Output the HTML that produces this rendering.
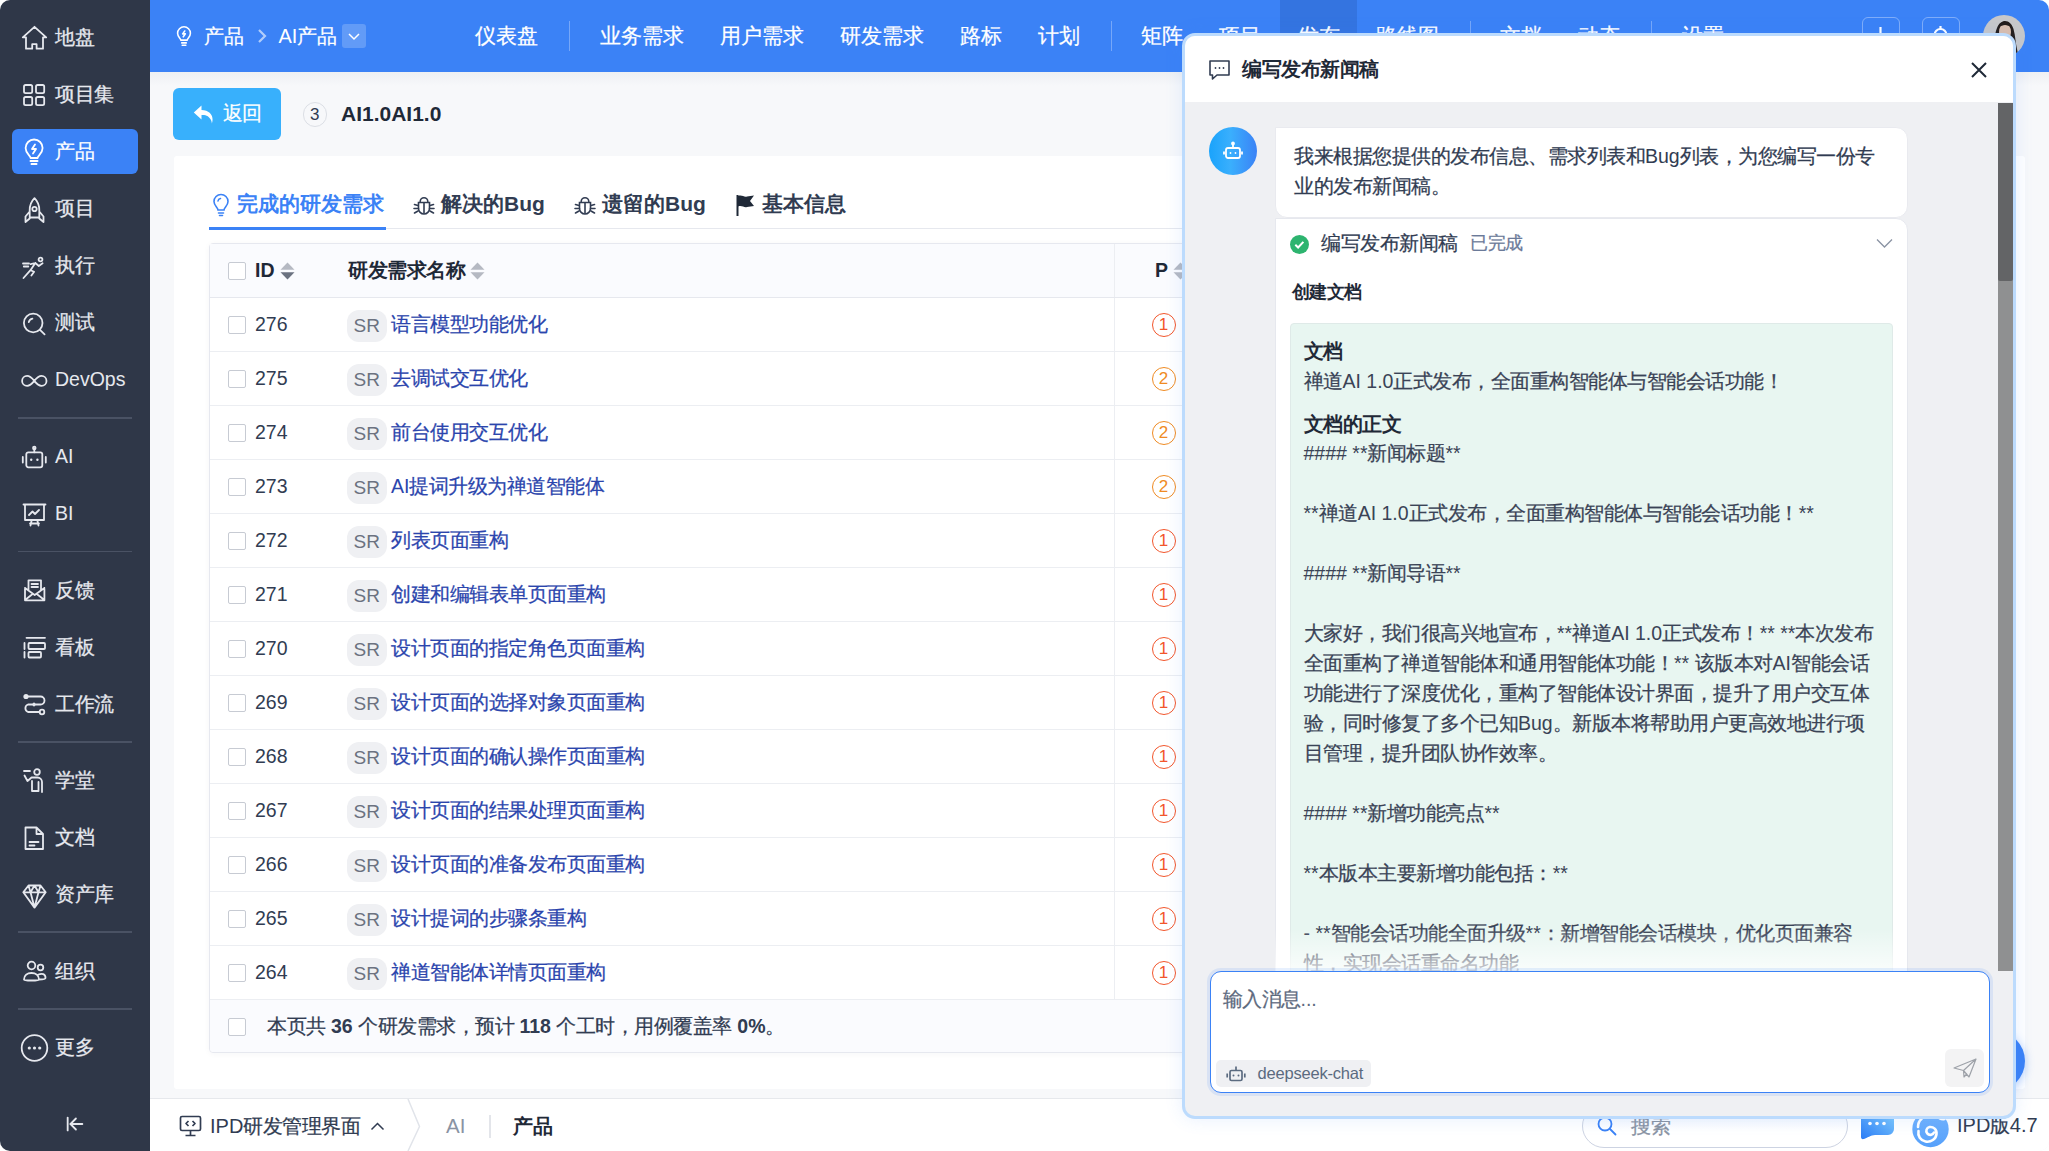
<!DOCTYPE html>
<html><head><meta charset="utf-8">
<style>
*{box-sizing:border-box;margin:0;padding:0}
html,body{width:2049px;height:1151px;overflow:hidden;background:#ffffff}
body{font-family:"Liberation Sans",sans-serif;color:#313c52;position:relative}
.abs{position:absolute}
#app{position:absolute;left:0;top:0;width:2049px;height:1151px;border-radius:10px;overflow:hidden;background:#f5f6f8}
#side{position:absolute;left:0;top:0;width:150px;height:1151px;background:#2f3748}
#head{position:absolute;left:0;top:0;width:2049px;height:72px}
#head .bg{position:absolute;left:150px;top:0;width:1899px;height:72px;background:#3b82f6}
#main{position:absolute;left:0;top:0;width:2049px;height:1098px}
#main .bg{position:absolute;left:150px;top:72px;width:1899px;height:1026px;background:#f7f8fa}
#foot{position:absolute;left:150px;top:1098px;width:1899px;height:53px;background:#fff;border-top:1px solid #e6e8ec}
.si{position:absolute;left:12px;width:126px;height:45px;border-radius:6px;color:#e6e8ee;font-size:19.5px;line-height:45px}
.si .ic{position:absolute;left:9px;top:9.5px;width:26px;height:26px;overflow:visible}
.si .tx{position:absolute;left:43px;top:0}
.si.act{background:#3b82f6;color:#fff}
.sdiv{position:absolute;left:18px;width:114px;height:1.5px;background:#4a5264}
.nav{position:absolute;top:14px;height:44px;line-height:44px;color:#fff;font-size:21px;white-space:nowrap}
.nsep{position:absolute;top:21px;width:1px;height:30px;background:rgba(255,255,255,.3)}
.card{position:absolute;left:174px;top:155.5px;width:1851px;height:933px;background:#fff;border-radius:3px}
.btnback{position:absolute;left:172.5px;top:88px;width:108px;height:51.5px;background:#38b0fc;border-radius:6px;color:#fff;font-size:19.5px;line-height:51.5px}
.tab{position:absolute;top:185px;height:38px;line-height:38px;font-size:21px;font-weight:bold;color:#313c52;white-space:nowrap}
.tbl{position:absolute;left:209px;top:243px;width:1781px;height:810px;border:1px solid #e6e8ef;border-radius:4px;background:#fff;box-shadow:0 1px 6px rgba(30,40,80,.04)}
.th{position:absolute;left:0;top:0;width:100%;height:54px;background:#fafbfe;border-bottom:1px solid #e6e8ee}
.row{position:absolute;left:0;width:100%;height:54px;border-bottom:1px solid #eceef2}
.cb{position:absolute;left:18px;top:18px;width:18px;height:18px;border:1.5px solid #c7cbd3;border-radius:2px;background:#fff}
.cell{position:absolute;top:0;height:53px;line-height:53px;font-size:19.5px;white-space:nowrap;color:#313c52}
.sr{position:absolute;left:137px;top:12px;width:39.5px;height:32px;border-radius:12px;background:#eff0f3;color:#6b7280;font-size:19px;line-height:32px;text-align:center}
.lnk{position:absolute;left:181px;top:0;line-height:53px;font-size:19.5px;color:#2b45ad;white-space:nowrap}
.pri{position:absolute;left:941.5px;top:15px;width:24px;height:24px;border-radius:50%;border:1.5px solid #f2562c;color:#f2562c;font-size:17px;line-height:21px;text-align:center}
.pri.o{border-color:#ef8b23;color:#ef8b23}
.vsep{position:absolute;left:903.5px;top:0;width:1px;height:100%;background:#eceef2}
.panel{position:absolute;left:1182px;top:33px;width:834px;height:1086px;border:3px solid #bcdbfd;border-radius:13px;background:#eff0f3;overflow:hidden;box-shadow:0 0 18px rgba(59,130,246,.12)}
.ph{position:absolute;left:0;top:0;width:100%;height:66px;background:#fff}
.ml{position:absolute;left:0;height:30px;line-height:30px;font-size:19.5px;white-space:nowrap;color:#3a4356}
.gb .ml{left:12.5px}
.c{letter-spacing:-0.5px}
.nav .c,.tab .c,.t21 .c,.t20 .c{letter-spacing:0}
.c{-webkit-text-stroke:0.25px currentColor}
b .c,.tab .c,[style*="font-weight:bold"] .c,.t20 .c{-webkit-text-stroke:0}

</style></head><body>
<div id="app">
 <div id="side">
<div class="si" style="top:15.0px"><svg class="ic" viewBox="0 0 26 26" fill="none" stroke="currentColor" stroke-width="1.8" stroke-linecap="round" stroke-linejoin="round"><path d="M1.8 12.3L13.5 1.8 25.2 12.3H22V23.7H15.6V19.2H11.2V23.7H5V12.3z"/></svg><span class="tx"><span class=c>地盘</span></span></div>
<div class="si" style="top:72.0px"><svg class="ic" viewBox="0 0 26 26" fill="none" stroke="currentColor" stroke-width="1.8" stroke-linecap="round" stroke-linejoin="round"><rect x="3" y="3" width="8.2" height="8.2" rx="1.6"/><rect x="15" y="3" width="8.2" height="8.2" rx="1.6"/><rect x="3" y="15" width="8.2" height="8.2" rx="1.6"/><rect x="15" y="15" width="8.2" height="8.2" rx="1.6"/></svg><span class="tx"><span class=c>项目集</span></span></div>
<div class="si act" style="top:129.0px"><svg class="ic" viewBox="0 0 26 26" fill="none" stroke="currentColor" stroke-width="1.8" stroke-linecap="round" stroke-linejoin="round"><path d="M9.6 19c0-2.5-5-4.2-5-10a8.5 8.5 0 0 1 17 0c0 5.8-5 7.5-5 10z"/><path d="M9.5 22h7M10.5 25h5" stroke-width="2"/><path d="M14 5.5l-3 4.5h4l-3 4.5"/></svg><span class="tx"><span class=c>产品</span></span></div>
<div class="si" style="top:186.0px"><svg class="ic" viewBox="0 0 26 26" fill="none" stroke="currentColor" stroke-width="1.8" stroke-linecap="round" stroke-linejoin="round"><path d="M13.5 2.2c3.5 3.5 4.8 7.8 4.8 12v7.3H8.7v-7.3c0-4.2 1.3-8.5 4.8-12zM8.7 15.5L4.5 20.5v5.5l4.2-3.5M18.3 15.5l4.2 5v5.5l-4.2-3.5"/><circle cx="13.5" cy="13" r="2.2"/></svg><span class="tx"><span class=c>项目</span></span></div>
<div class="si" style="top:243.0px"><svg class="ic" viewBox="0 0 26 26" fill="none" stroke="currentColor" stroke-width="1.8" stroke-linecap="round" stroke-linejoin="round"><circle cx="19.5" cy="6.5" r="1.9"/><path d="M2.5 25l7-7.8 3.6 1.6-2.7 3.8M9.5 17.2l4.8-7.2-4.6 1.2M14.3 10l3.5 3 3.8-2.7M2 10.5h6M2.8 13.5h4.5"/></svg><span class="tx"><span class=c>执行</span></span></div>
<div class="si" style="top:300.0px"><svg class="ic" viewBox="0 0 26 26" fill="none" stroke="currentColor" stroke-width="1.8" stroke-linecap="round" stroke-linejoin="round"><circle cx="12.2" cy="13" r="9.3"/><path d="M19 19.8l4.6 4.5M7.8 12.2a4.5 4.5 0 0 1 3.6-3.6"/></svg><span class="tx"><span class=c>测试</span></span></div>
<div class="si" style="top:357.0px"><svg class="ic" viewBox="0 0 26 26" fill="none" stroke="currentColor" stroke-width="1.8" stroke-linecap="round" stroke-linejoin="round"><path d="M13.3 13.9c-2.4-3-4.2-5-7.2-5a5 5 0 0 0 0 10c3 0 4.8-2 7.2-5s4.2-5 7.2-5a5 5 0 0 1 0 10c-3 0-4.8-2-7.2-5z"/></svg><span class="tx">DevOps</span></div>
<div class="si" style="top:434.0px"><svg class="ic" viewBox="0 0 26 26" fill="none" stroke="currentColor" stroke-width="1.8" stroke-linecap="round" stroke-linejoin="round"><rect x="5.3" y="8.3" width="16" height="15" rx="2"/><path d="M13.3 4.5v3.8M1.8 13v5.5M24.8 13v5.5"/><circle cx="13.3" cy="4" r="1.3"/><circle cx="10.2" cy="15.8" r="1.2" fill="currentColor" stroke="none"/><circle cx="16.4" cy="15.8" r="1.2" fill="currentColor" stroke="none"/></svg><span class="tx">AI</span></div>
<div class="si" style="top:491.0px"><svg class="ic" viewBox="0 0 26 26" fill="none" stroke="currentColor" stroke-width="1.8" stroke-linecap="round" stroke-linejoin="round"><path d="M2.5 3.5h22M4 3.5v15.5h19V3.5M9.5 24.5l1.2-5.5M17.5 24.5l-1.2-5.5M9 22.5h9M8 14l3.5-3.5 2.5 2.5 4-4"/></svg><span class="tx">BI</span></div>
<div class="si" style="top:567.5px"><svg class="ic" viewBox="0 0 26 26" fill="none" stroke="currentColor" stroke-width="1.8" stroke-linecap="round" stroke-linejoin="round"><path d="M4 11l9.7 7 9.7-7M4 11v12.3h19.4V11M7.5 13V3.3h12.5V13M10.5 7h6.5M10.5 10h6.5M4 23l7-5.5M23.4 23l-7-5.5"/></svg><span class="tx"><span class=c>反馈</span></span></div>
<div class="si" style="top:624.5px"><svg class="ic" viewBox="0 0 26 26" fill="none" stroke="currentColor" stroke-width="1.8" stroke-linecap="round" stroke-linejoin="round"><path d="M5.5 3.8h18.5M8.5 9h14.5a1 1 0 0 1 1 1v4a1 1 0 0 1-1 1H8.5a1 1 0 0 1-1-1v-4a1 1 0 0 1 1-1zM8.5 18h10.5a1 1 0 0 1 1 1v3.5a1 1 0 0 1-1 1H8.5a1 1 0 0 1-1-1V19a1 1 0 0 1 1-1zM3.5 9v6M3.5 18v5.5"/></svg><span class="tx"><span class=c>看板</span></span></div>
<div class="si" style="top:681.5px"><svg class="ic" viewBox="0 0 26 26" fill="none" stroke="currentColor" stroke-width="1.8" stroke-linecap="round" stroke-linejoin="round"><circle cx="5" cy="5.5" r="2.6" fill="currentColor" stroke="none"/><circle cx="21" cy="21" r="2.3"/><path d="M7.5 5.5h12a4 4 0 0 1 0 8H7a4 4 0 0 0 0 7.5h11.5"/><path d="M13 11.2l2.2 2.3-2.2 2.3-2.2-2.3z" fill="currentColor" stroke="none"/></svg><span class="tx"><span class=c>工作流</span></span></div>
<div class="si" style="top:757.5px"><svg class="ic" viewBox="0 0 26 26" fill="none" stroke="currentColor" stroke-width="1.8" stroke-linecap="round" stroke-linejoin="round"><circle cx="16" cy="5" r="2.8"/><path d="M3 4h6M3.5 8.5l3 5.5 4-3.5h6a4.5 4.5 0 0 1 4.5 4.5V25M11 14v10h6.5v-9"/></svg><span class="tx"><span class=c>学堂</span></span></div>
<div class="si" style="top:814.5px"><svg class="ic" viewBox="0 0 26 26" fill="none" stroke="currentColor" stroke-width="1.8" stroke-linecap="round" stroke-linejoin="round"><path d="M4.5 3.5h11l6.5 6.5v15H4.5zM15.5 3.5v6.5h6.5M8.5 18h9M8.5 21.5h5"/></svg><span class="tx"><span class=c>文档</span></span></div>
<div class="si" style="top:871.5px"><svg class="ic" viewBox="0 0 26 26" fill="none" stroke="currentColor" stroke-width="1.8" stroke-linecap="round" stroke-linejoin="round"><path d="M2.3 11.3L7.5 4.5h12l5.2 6.8-11.2 15.3zM2.3 11.3h22.4M9.5 11.3l4 15.3 4-15.3M7.5 4.5l2 6.8 4-6.8 4 6.8 2-6.8"/></svg><span class="tx"><span class=c>资产库</span></span></div>
<div class="si" style="top:948.5px"><svg class="ic" viewBox="0 0 26 26" fill="none" stroke="currentColor" stroke-width="1.8" stroke-linecap="round" stroke-linejoin="round"><circle cx="10.5" cy="7.5" r="3.8"/><circle cx="19.5" cy="9.5" r="2.8"/><path d="M3 21.5c0-4 3.2-6.5 7.5-6.5s7.5 2.5 7.5 6.5c0 1.5-15 1.5-15 0zM17.5 16.5c3.5-1.5 7-.5 7 3.5 0 1.5-3.5 1.5-6.5 1.5"/></svg><span class="tx"><span class=c>组织</span></span></div>
<div class="si" style="top:1024.5px"><svg class="ic" viewBox="0 0 26 26" fill="none" stroke="currentColor" stroke-width="1.8" stroke-linecap="round" stroke-linejoin="round"><circle cx="13.5" cy="14" r="12.8"/><circle cx="8.3" cy="14" r="1.6" fill="currentColor" stroke="none"/><circle cx="13.5" cy="14" r="1.6" fill="currentColor" stroke="none"/><circle cx="18.7" cy="14" r="1.6" fill="currentColor" stroke="none"/></svg><span class="tx"><span class=c>更多</span></span></div>
<div class="sdiv" style="top:417.25px"></div>
<div class="sdiv" style="top:550.75px"></div>
<div class="sdiv" style="top:741.25px"></div>
<div class="sdiv" style="top:931.25px"></div>
<div class="sdiv" style="top:1008.25px"></div>
<svg class="abs" style="left:64px;top:1113px" width="22" height="22" viewBox="0 0 24 24" fill="none" stroke="#e6e8ee" stroke-width="2" stroke-linecap="round"><path d="M4 5v14M20 12H8M13 6l-6 6 6 6"/></svg>
 </div>
 <div id="head">
<div class="bg"></div>
<div class="abs" style="left:1280px;top:0;width:77px;height:72px;background:#3474e0"></div>
<div class="nav" style="left:475px"><span class=c>仪表盘</span></div>
<div class="nav" style="left:600px"><span class=c>业务需求</span></div>
<div class="nav" style="left:719.6px"><span class=c>用户需求</span></div>
<div class="nav" style="left:839.7px"><span class=c>研发需求</span></div>
<div class="nav" style="left:959.5px"><span class=c>路标</span></div>
<div class="nav" style="left:1038px"><span class=c>计划</span></div>
<div class="nav" style="left:1141px"><span class=c>矩阵</span></div>
<div class="nav" style="left:1218.6px"><span class=c>项目</span></div>
<div class="nav" style="left:1298px"><span class=c>发布</span></div>
<div class="nav" style="left:1375.7px"><span class=c>路线图</span></div>
<div class="nav" style="left:1500px"><span class=c>文档</span></div>
<div class="nav" style="left:1578px"><span class=c>动态</span></div>
<div class="nav" style="left:1682px"><span class=c>设置</span></div>
<div class="nsep" style="left:569px"></div>
<div class="nsep" style="left:1111px"></div>
<div class="nsep" style="left:1469.5px"></div>
<div class="nsep" style="left:1650.5px"></div>
<svg class="abs" style="left:173px;top:24px" width="22" height="24" viewBox="0 0 24 24" fill="none" stroke="#fff" stroke-width="1.7" stroke-linecap="round" stroke-linejoin="round"><path d="M8.5 16.5c0-2-3.5-3.5-3.5-7.5a7 7 0 0 1 14 0c0 4-3.5 5.5-3.5 7.5zM9.5 19.5h5M10 22h4M12.8 6.5l-2.3 3.2h3l-2.3 3.2"/></svg>
<div class="nav" style="left:204px;font-size:20px"><span class=c>产品</span></div>
<svg class="abs" style="left:256px;top:28px" width="12" height="16" viewBox="0 0 12 16" fill="none" stroke="rgba(255,255,255,.6)" stroke-width="2.2"><path d="M3 2l6 6-6 6"/></svg>
<div class="nav" style="left:278.5px;font-size:20px">AI<span class=c>产品</span></div>
<div class="abs" style="left:342px;top:24px;width:24px;height:24px;border-radius:3px;background:rgba(255,255,255,.2)"><svg width="24" height="24" viewBox="0 0 24 24" fill="none" stroke="#fff" stroke-width="1.5"><path d="M7 10l5 5 5-5"/></svg></div>
<div class="abs" style="left:1862px;top:16.5px;width:38px;height:38px;border:1.5px solid rgba(255,255,255,.35);border-radius:6px"><svg width="35" height="35" viewBox="0 0 35 35" stroke="#fff" stroke-width="2.2"><path d="M17.5 9v17M9 17.5h17"/></svg></div>
<div class="abs" style="left:1922px;top:16.5px;width:38px;height:38px;border:1.5px solid rgba(255,255,255,.35);border-radius:6px"><svg width="35" height="35" viewBox="0 0 35 35" fill="none" stroke="#fff" stroke-width="2.2"><circle cx="17.5" cy="17" r="6"/><path d="M17.5 8v3"/></svg></div>
<div class="abs" style="left:1983px;top:14.5px;width:42px;height:42px;border-radius:50%;background:#c8c8ca;overflow:hidden"><svg width="42" height="42" viewBox="0 0 42 42"><path d="M11 42c0-10 0-22 3-29 2-5 5-7 8-7 4 0 7 3 8.5 8 2 7 2 14 3.5 20 .5 3 1.5 6 2.5 8z" fill="#241c1a"/><ellipse cx="22" cy="17" rx="6" ry="8.5" fill="#dcbfae"/><path d="M14.5 42c1-6 3.5-9 7.5-9s6.5 3 7 9z" fill="#e9e4e0"/><path d="M15 12c2-4 5-5 8-5 3 0 5 2 6 5-3-1-5-2-7-2s-4 1-7 2z" fill="#241c1a"/></svg></div>
 </div>
 <div id="main">
<div class="bg"></div>
<div class="abs" style="left:150px;top:72px;width:1899px;height:14px;background:linear-gradient(#eef0f3,rgba(247,248,250,0))"></div>
<div class="btnback"><svg class="abs" style="left:20px;top:17px" width="21" height="19" viewBox="0 0 21 19"><path d="M8.5 0.5L0.8 7.5l7.7 7V10c4.5-.3 8 1.2 9.8 5.8.5 1.3.6 2.5.5 3 2.6-7.500-1.5-13.500-10.3-13.800z" fill="#fff"/></svg><span class="abs" style="left:50px"><span class=c>返回</span></span></div>
<div class="abs" style="left:302.5px;top:102px;width:24.5px;height:24.5px;border-radius:50%;border:1.5px solid #dcdfe5;font-size:17px;line-height:23px;text-align:center;color:#313c52">3</div>
<div class="abs" style="left:341px;top:96px;height:36px;line-height:36px;font-size:21px;font-weight:bold;color:#1f2937">AI1.0AI1.0</div>
<div class="card"></div>
<svg class="abs" style="left:210px;top:193px" width="22" height="24" viewBox="0 0 22 24" fill="none" stroke="#3b82f6" stroke-width="1.6" stroke-linecap="round"><path d="M8 17c0-2.5-4-4-4-8.5a7 7 0 0 1 14 0C18 13 14 14.5 14 17zM8.5 20h5M9.5 22.5h3M8 8a3 3 0 0 1 2.5-2.5"/></svg>
<div class="tab" style="left:237px;color:#3b82f6"><span class=c>完成的研发需求</span></div>
<svg class="abs" style="left:413px;top:193px" width="22" height="24" viewBox="0 0 22 22" fill="none" stroke="#313c52" stroke-width="1.6" stroke-linecap="round"><path d="M7.2 7.5a3.8 3.8 0 0 1 7.6 0"/><path d="M5.5 8.5h11v6a5.5 5.5 0 0 1-11 0z"/><path d="M1.5 10.5l3.5 1M20.5 10.5l-3.5 1M1 14.5h4.5M21 14.5h-4.5M1.5 19l3.5-2M20.5 19l-3.5-2M11 9v10"/></svg>
<div class="tab" style="left:441px"><span class=c>解决的</span>Bug</div>
<svg class="abs" style="left:574px;top:193px" width="22" height="24" viewBox="0 0 22 22" fill="none" stroke="#313c52" stroke-width="1.6" stroke-linecap="round"><path d="M7.2 7.5a3.8 3.8 0 0 1 7.6 0"/><path d="M5.5 8.5h11v6a5.5 5.5 0 0 1-11 0z"/><path d="M1.5 10.5l3.5 1M20.5 10.5l-3.5 1M1 14.5h4.5M21 14.5h-4.5M1.5 19l3.5-2M20.5 19l-3.5-2M11 9v10"/></svg>
<div class="tab" style="left:602px"><span class=c>遗留的</span>Bug</div>
<svg class="abs" style="left:735px;top:193px" width="22" height="24" viewBox="0 0 22 24"><path d="M2.5 2v21" stroke="#1f2937" stroke-width="2"/><path d="M3 3c4-1.5 6 1.5 9 .5l7-1-4 5.5 4 5-7 1c-3 1-5-2-9-.5z" fill="#1f2937"/></svg>
<div class="tab" style="left:762px"><span class=c>基本信息</span></div>
<div class="abs" style="left:386px;top:227.5px;width:1604px;height:1.5px;background:#e6e8ee"></div>
<div class="abs" style="left:209px;top:226.5px;width:177px;height:3.5px;background:#3b82f6"></div>
<div class="tbl">
<div class="th"><div class="cb" style="top:18px"></div>
<div class="cell" style="left:45px;font-weight:bold;color:#1f2937">ID <span style="position:relative;top:-1px"><svg width="15" height="22" viewBox="0 0 15 22" style="vertical-align:middle"><path d="M0.5 9.8L7.5 2.5l7 7.3z" fill="#b5b9c2"/><path d="M0.5 12.2L7.5 19.5l7-7.3z" fill="#6b7280"/></svg></span></div>
<div class="cell" style="left:138px;font-weight:bold;color:#1f2937"><span class=c>研发需求名称</span> <span style="position:relative;top:-1px"><svg width="15" height="22" viewBox="0 0 15 22" style="vertical-align:middle"><path d="M0.5 9.8L7.5 2.5l7 7.3z" fill="#b5b9c2"/><path d="M0.5 12.2L7.5 19.5l7-7.3z" fill="#b5b9c2"/></svg></span></div>
<div class="vsep"></div>
<div class="cell" style="left:945px;font-weight:bold;color:#1f2937">P <span style="position:relative;top:-1px"><svg width="15" height="22" viewBox="0 0 15 22" style="vertical-align:middle"><path d="M0.5 9.8L7.5 2.5l7 7.3z" fill="#b5b9c2"/><path d="M0.5 12.2L7.5 19.5l7-7.3z" fill="#b5b9c2"/></svg></span></div>
</div>
<div class="row" style="top:54px"><div class="cb"></div><div class="cell" style="left:45px">276</div><div class="sr">SR</div><div class="lnk"><span class=c>语言模型功能优化</span></div><div class="vsep"></div><div class="pri">1</div></div>
<div class="row" style="top:108px"><div class="cb"></div><div class="cell" style="left:45px">275</div><div class="sr">SR</div><div class="lnk"><span class=c>去调试交互优化</span></div><div class="vsep"></div><div class="pri o">2</div></div>
<div class="row" style="top:162px"><div class="cb"></div><div class="cell" style="left:45px">274</div><div class="sr">SR</div><div class="lnk"><span class=c>前台使用交互优化</span></div><div class="vsep"></div><div class="pri o">2</div></div>
<div class="row" style="top:216px"><div class="cb"></div><div class="cell" style="left:45px">273</div><div class="sr">SR</div><div class="lnk">AI<span class=c>提词升级为禅道智能体</span></div><div class="vsep"></div><div class="pri o">2</div></div>
<div class="row" style="top:270px"><div class="cb"></div><div class="cell" style="left:45px">272</div><div class="sr">SR</div><div class="lnk"><span class=c>列表页面重构</span></div><div class="vsep"></div><div class="pri">1</div></div>
<div class="row" style="top:324px"><div class="cb"></div><div class="cell" style="left:45px">271</div><div class="sr">SR</div><div class="lnk"><span class=c>创建和编辑表单页面重构</span></div><div class="vsep"></div><div class="pri">1</div></div>
<div class="row" style="top:378px"><div class="cb"></div><div class="cell" style="left:45px">270</div><div class="sr">SR</div><div class="lnk"><span class=c>设计页面的指定角色页面重构</span></div><div class="vsep"></div><div class="pri">1</div></div>
<div class="row" style="top:432px"><div class="cb"></div><div class="cell" style="left:45px">269</div><div class="sr">SR</div><div class="lnk"><span class=c>设计页面的选择对象页面重构</span></div><div class="vsep"></div><div class="pri">1</div></div>
<div class="row" style="top:486px"><div class="cb"></div><div class="cell" style="left:45px">268</div><div class="sr">SR</div><div class="lnk"><span class=c>设计页面的确认操作页面重构</span></div><div class="vsep"></div><div class="pri">1</div></div>
<div class="row" style="top:540px"><div class="cb"></div><div class="cell" style="left:45px">267</div><div class="sr">SR</div><div class="lnk"><span class=c>设计页面的结果处理页面重构</span></div><div class="vsep"></div><div class="pri">1</div></div>
<div class="row" style="top:594px"><div class="cb"></div><div class="cell" style="left:45px">266</div><div class="sr">SR</div><div class="lnk"><span class=c>设计页面的准备发布页面重构</span></div><div class="vsep"></div><div class="pri">1</div></div>
<div class="row" style="top:648px"><div class="cb"></div><div class="cell" style="left:45px">265</div><div class="sr">SR</div><div class="lnk"><span class=c>设计提词的步骤条重构</span></div><div class="vsep"></div><div class="pri">1</div></div>
<div class="row" style="top:702px"><div class="cb"></div><div class="cell" style="left:45px">264</div><div class="sr">SR</div><div class="lnk"><span class=c>禅道智能体详情页面重构</span></div><div class="vsep"></div><div class="pri">1</div></div>
<div class="row" style="top:756px;background:#fafbfe;border-bottom:none;height:52px;border-radius:0 0 4px 4px"><div class="cb"></div><div class="cell" style="left:57px"><span class=c>本页共</span> <b>36</b> <span class=c>个研发需求，预计</span> <b>118</b> <span class=c>个工时，用例覆盖率</span> <b>0%</b><span class=c>。</span></div></div>
</div>
 </div>
 <div id="foot">
<svg class="abs" style="left:29px;top:16px" width="23" height="22" viewBox="0 0 23 22" fill="none" stroke="#313c52" stroke-width="1.7" stroke-linejoin="round"><rect x="1.5" y="1.5" width="20" height="14" rx="1.5"/><path d="M11.5 15.5v4.5M6.5 20.5h10M9.5 6l-2.5 2.5 2.5 2.5M13.5 6l2.5 2.5-2.5 2.5"/></svg>
<div class="abs" style="left:60px;top:12px;height:30px;line-height:30px;font-size:20px;color:#313c52;white-space:nowrap">IPD<span class=c>研发管理界面</span></div>
<svg class="abs" style="left:220px;top:22px" width="15" height="10" viewBox="0 0 15 10" fill="none" stroke="#313c52" stroke-width="1.5"><path d="M1.5 8.5l6-6 6 6"/></svg>
<svg class="abs" style="left:256px;top:0px" width="16" height="52" viewBox="0 0 16 52" fill="none" stroke="#e1e4ea" stroke-width="1.5"><path d="M2 0l11.5 27.5L2 52"/></svg>
<div class="abs" style="left:296px;top:12px;height:30px;line-height:30px;font-size:20.5px;color:#8a93a3">AI</div>
<div class="abs" style="left:339px;top:15.5px;width:1.5px;height:23px;background:#e3e5ea"></div>
<div class="abs" style="left:363px;top:12px;height:30px;line-height:30px;font-size:20px;font-weight:bold;color:#1f2937"><span class=c>产品</span></div>
<div class="abs" style="left:1432px;top:5px;width:266px;height:44px;border-radius:22px;border:1.5px solid #cdd3e2;background:linear-gradient(#e9f0fc,#fff 60%)"><svg class="abs" style="left:13px;top:10px" width="22" height="22" viewBox="0 0 22 22" fill="none" stroke="#3b82f6" stroke-width="1.8" stroke-linecap="round"><circle cx="9" cy="9" r="6.5"/><path d="M14 14l5.5 5.5"/></svg><span class="abs" style="left:48px;top:6px;line-height:30px;font-size:20px;color:#8a93a3"><span class=c>搜索</span></span></div>
<svg class="abs" style="left:1708px;top:13px" width="37" height="30" viewBox="0 0 37 30"><defs><linearGradient id="cg" x1="0" y1="1" x2="1" y2="0"><stop offset="0" stop-color="#2a7cf6"/><stop offset="1" stop-color="#80cbfc"/></linearGradient></defs><path d="M3 2h31a2 2 0 0 1 2 2v13a6 6 0 0 1-6 6H17c-4 0-8 3-11 4-2 .6-3-.5-3-2V4a2 2 0 0 1 2-2z" fill="url(#cg)"/><circle cx="12" cy="11.5" r="1.8" fill="#fff"/><circle cx="19" cy="11.5" r="1.8" fill="#fff"/><circle cx="26" cy="11.5" r="1.8" fill="#fff"/></svg>
<svg class="abs" style="left:1761px;top:10.5px" width="39" height="38" viewBox="0 0 39 38"><defs><linearGradient id="lg" x1="0" y1="0" x2="0" y2="1"><stop offset="0" stop-color="#78b6fd"/><stop offset="1" stop-color="#55a0fb"/></linearGradient></defs><circle cx="19.5" cy="19" r="18.2" fill="url(#lg)"/><path d="M23 22.5a4 4 0 1 1-4.5-5.5c4-.5 7.5 2.5 7 7-.5 5-5.5 8.5-11 7.5-5-1-8-5.5-7-10.5M10.5 9c-2.5 2-3.5 5-3.5 8M26 5.5c2 3 5 4 7.5 3.5" fill="none" stroke="#fff" stroke-width="2.6" stroke-linecap="round"/></svg>
<div class="abs" style="left:1807px;top:10px;height:32px;line-height:32px;font-size:20px;color:#313c52;white-space:nowrap">IPD<span class=c>版</span>4.7</div>
 </div>
<div class="abs" style="left:1965px;top:1031px;width:60px;height:60px;border-radius:50%;background:#3b82f6;box-shadow:0 2px 10px rgba(59,130,246,.4)"></div>
<div class="panel">
<div class="ph">
<svg class="abs" style="left:23px;top:23px" width="23" height="22" viewBox="0 0 23 22" fill="none" stroke="#313c52" stroke-width="1.6" stroke-linejoin="round"><path d="M2 2h19v14H9l-4.5 4v-4H2z"/><circle cx="7.5" cy="9" r=".9" fill="#313c52" stroke="none"/><circle cx="11.5" cy="9" r=".9" fill="#313c52" stroke="none"/><circle cx="15.5" cy="9" r=".9" fill="#313c52" stroke="none"/></svg>
<div class="abs" style="left:57px;top:16px;height:34px;line-height:34px;font-size:20px;font-weight:bold;color:#1f2937"><span class=c>编写发布新闻稿</span></div>
<svg class="abs" style="left:784px;top:24px" width="20" height="20" viewBox="0 0 20 20" stroke="#1f2937" stroke-width="2"><path d="M3 3l14 14M17 3L3 17"/></svg>
</div>
<div class="abs" style="left:0;top:0;width:813px;height:935px;overflow:hidden">
<div class="abs" style="left:24px;top:91px;width:48px;height:48px;border-radius:50%;background:linear-gradient(90deg,#1aa3fb,#3aaffd 45%,#3b82f6)"><svg class="abs" style="left:12px;top:12px" width="24" height="24" viewBox="0 0 24 24" fill="none" stroke="#fff" stroke-width="1.8"><rect x="5" y="9" width="14" height="10" rx="2"/><path d="M12 5v4M3 12.5v3M21 12.5v3"/><circle cx="12" cy="4.5" r="1" fill="#fff"/><circle cx="9.5" cy="14" r=".9" fill="#fff" stroke="none"/><circle cx="14.5" cy="14" r=".9" fill="#fff" stroke="none"/></svg></div>
<div class="abs" style="left:89.5px;top:90.5px;width:633.5px;height:91px;background:#fff;border-radius:0 12px 12px 12px;border:1px solid #e9eaef">
<div class="ml" style="left:18.5px;top:13.5px;color:#313c52"><span class=c>我来根据您提供的发布信息、需求列表和</span>Bug<span class=c>列表，为您编写一份专</span></div>
<div class="ml" style="left:18.5px;top:43.5px;color:#313c52"><span class=c>业的发布新闻稿。</span></div>
</div>
<div class="abs" style="left:89.5px;top:182px;width:633px;height:900px;background:#fff;border-radius:0 12px 12px 12px;border:1px solid #e6e8ee">
<svg class="abs" style="left:14px;top:15.5px" width="19" height="19" viewBox="0 0 19 19"><circle cx="9.5" cy="9.5" r="9.5" fill="#2db46f"/><path d="M5.3 9.8l2.8 2.7 5.3-5.6" fill="none" stroke="#fff" stroke-width="2"/></svg>
<div class="ml" style="left:45.5px;top:9px;color:#313c52"><span class=c>编写发布新闻稿</span></div>
<div class="ml" style="left:194.5px;top:9px;color:#6b7a99;font-size:18px"><span class=c>已完成</span></div>
<svg class="abs" style="left:600px;top:19px" width="17" height="11" viewBox="0 0 17 11" fill="none" stroke="#8a93a3" stroke-width="1.3"><path d="M1 1.5l7.5 7.5L16 1.5"/></svg>
<div class="ml" style="left:16px;top:58px;font-weight:bold;color:#1f2937;font-size:18px"><span class=c>创建文档</span></div>
<div class="abs gb" style="left:14.5px;top:103.5px;width:602.5px;height:800px;background:#e8f6f1;border:1px solid #dfeae8;border-radius:4px">
<div class="ml" style="top:12.5px;font-weight:bold;color:#1f2937"><span class=c>文档</span></div>
<div class="ml" style="top:42.5px;"><span class=c>禅道</span>AI 1.0<span class=c>正式发布，全面重构智能体与智能会话功能！</span></div>
<div class="ml" style="top:85.5px;font-weight:bold;color:#1f2937"><span class=c>文档的正文</span></div>
<div class="ml" style="top:114.5px;">#### **<span class=c>新闻标题</span>**</div>
<div class="ml" style="top:144.5px;"></div>
<div class="ml" style="top:174.5px;">**<span class=c>禅道</span>AI 1.0<span class=c>正式发布，全面重构智能体与智能会话功能！</span>**</div>
<div class="ml" style="top:204.5px;"></div>
<div class="ml" style="top:234.5px;">#### **<span class=c>新闻导语</span>**</div>
<div class="ml" style="top:264.5px;"></div>
<div class="ml" style="top:294.5px;"><span class=c>大家好，我们很高兴地宣布，</span>**<span class=c>禅道</span>AI 1.0<span class=c>正式发布！</span>** **<span class=c>本次发布</span></div>
<div class="ml" style="top:324.5px;"><span class=c>全面重构了禅道智能体和通用智能体功能！</span>** <span class=c>该版本对</span>AI<span class=c>智能会话</span></div>
<div class="ml" style="top:354.5px;"><span class=c>功能进行了深度优化，重构了智能体设计界面，提升了用户交互体</span></div>
<div class="ml" style="top:384.5px;"><span class=c>验，同时修复了多个已知</span>Bug<span class=c>。新版本将帮助用户更高效地进行项</span></div>
<div class="ml" style="top:414.5px;"><span class=c>目管理，提升团队协作效率。</span></div>
<div class="ml" style="top:444.5px;"></div>
<div class="ml" style="top:474.5px;">#### **<span class=c>新增功能亮点</span>**</div>
<div class="ml" style="top:504.5px;"></div>
<div class="ml" style="top:534.5px;">**<span class=c>本版本主要新增功能包括：</span>**</div>
<div class="ml" style="top:564.5px;"></div>
<div class="ml" style="top:594.5px;">- **<span class=c>智能会话功能全面升级</span>**<span class=c>：新增智能会话模块，优化页面兼容</span></div>
<div class="ml" style="top:624.5px;"><span class=c>性，实现会话重命名功能</span></div>
<div class="ml" style="top:654.5px;"></div>
<div class="ml" style="top:684.5px;"></div>
</div>
</div>
<div class="abs" style="left:90px;top:893px;width:632px;height:42px;background:linear-gradient(rgba(255,255,255,0),rgba(255,255,255,.75))"></div>
</div>
<div class="abs" style="left:813px;top:67px;width:15px;height:868px;background:#8f9091"></div>
<div class="abs" style="left:813px;top:67px;width:15px;height:178px;background:#636466;border-radius:0 0 2px 2px"></div>
<div class="abs" style="left:25px;top:935px;width:780px;height:122px;border:1.5px solid #3b82f6;border-radius:11px;background:#fff;box-shadow:0 0 0 3px rgba(59,130,246,.12)">
<div class="abs" style="left:11.5px;top:12px;height:30px;line-height:30px;font-size:19.5px;color:#5d6a7e"><span class=c>输入消息</span>...</div>
<div class="abs" style="left:4.5px;top:88px;width:155.5px;height:26.5px;border-radius:5px;background:#eff0f3"><svg class="abs" style="left:10px;top:4.5px" width="20" height="18" viewBox="0 0 20 18" fill="none" stroke="#5b6b80" stroke-width="1.7"><rect x="4" y="5.5" width="12" height="10" rx="1.5"/><path d="M10 1.5v4M1.2 8.5v4M18.8 8.5v4"/><circle cx="7.5" cy="10.5" r="1" fill="#5b6b80" stroke="none"/><circle cx="12.5" cy="10.5" r="1" fill="#5b6b80" stroke="none"/></svg><span class="abs" style="left:42px;top:0;line-height:26.5px;font-size:16.5px;color:#5b6b80;white-space:nowrap;letter-spacing:-0.2px">deepseek-chat</span></div>
<div class="abs" style="left:734px;top:76.5px;width:38.5px;height:38.5px;border-radius:6px;background:#f3f3f4"><svg class="abs" style="left:8px;top:9px" width="24" height="20" viewBox="0 0 24 20" fill="none" stroke="#9ea2a9" stroke-width="1.2" stroke-linejoin="round"><path d="M1 10L23 1l-7 18-5.5-6.5zM23 1L10.5 12.5 11 19l3-3.5"/></svg></div>
</div>
</div>
</div>
</body></html>
